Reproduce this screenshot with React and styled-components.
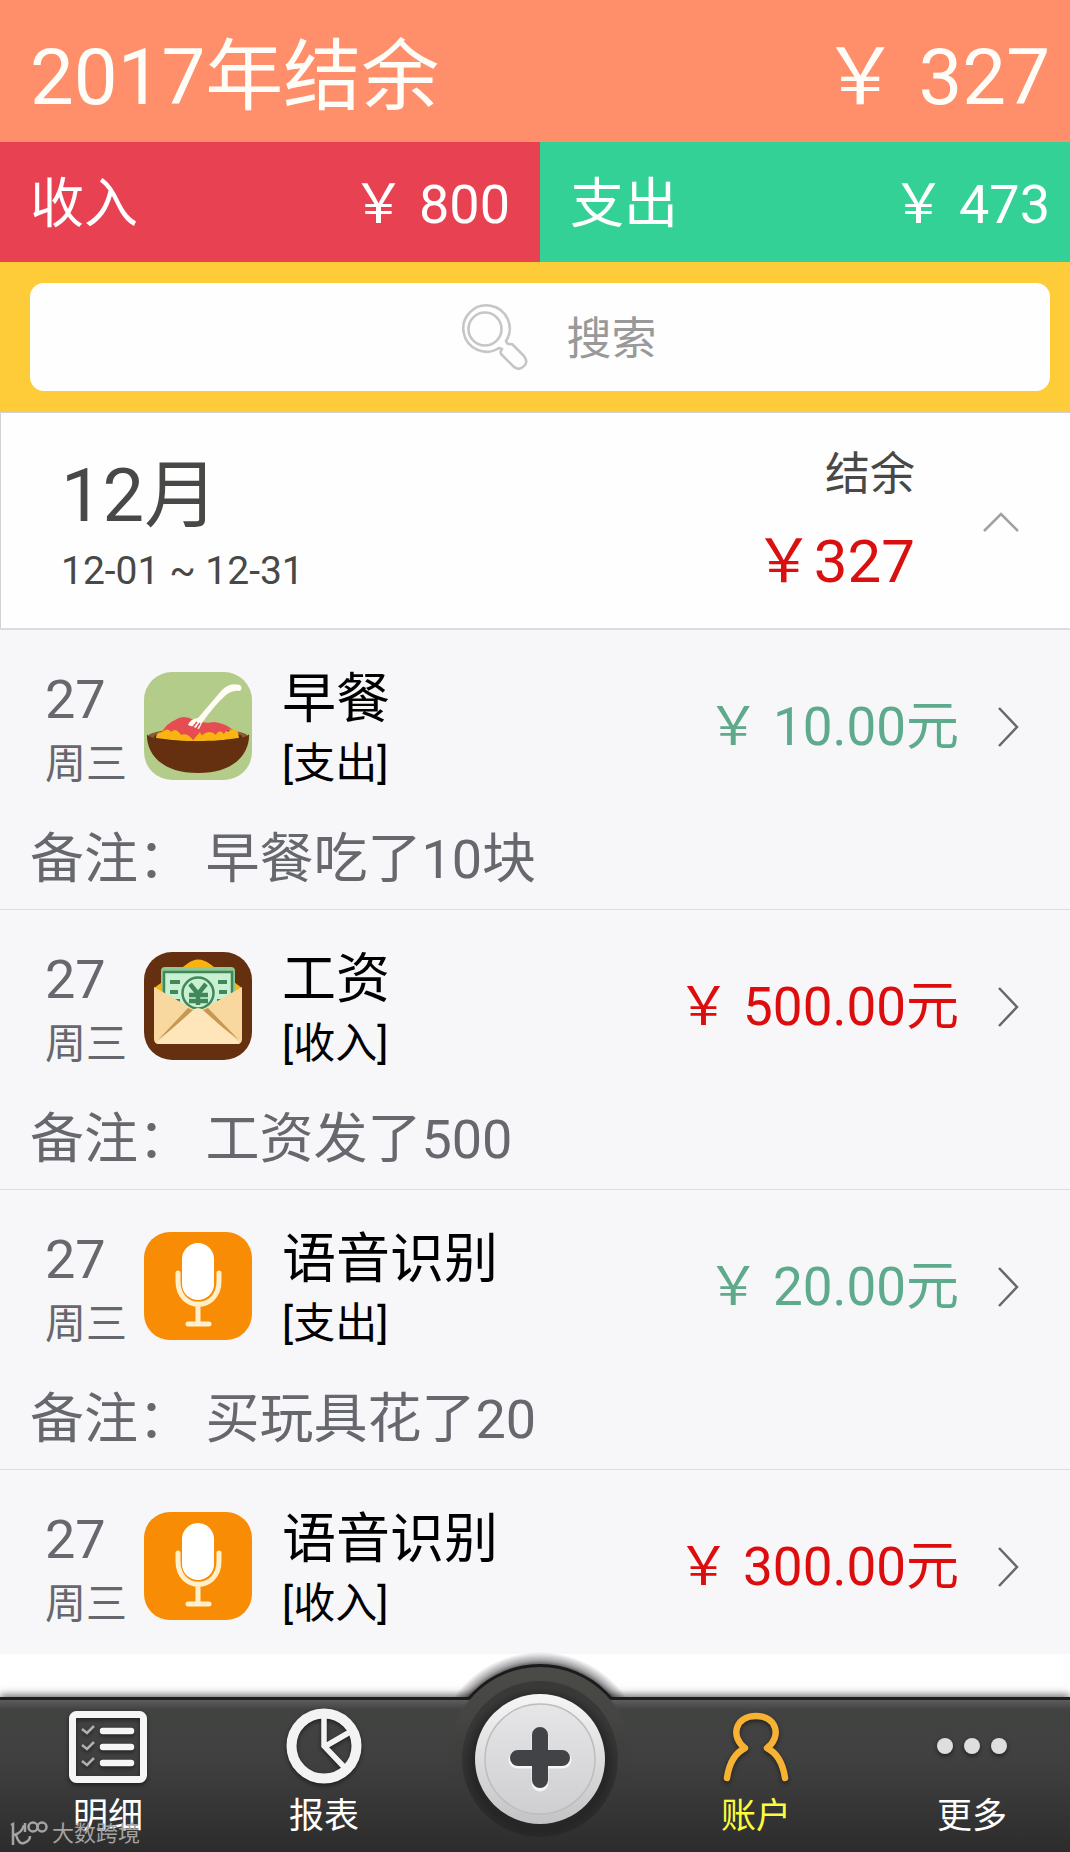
import React from "react";
import styled, { createGlobalStyle } from "styled-components";

const GlobalStyle = createGlobalStyle`
  * {
    box-sizing: border-box;
  }

  body {
    margin: 0;
    background: #fff;
    font-family: Roboto, "Noto Sans CJK SC", sans-serif;
  }

  button, input {
    font-family: inherit;
  }
`;

const Page = styled.div`
  display: flex;
  flex-direction: column;
  min-height: 100vh;
`;

const YearBar = styled.header`
  display: flex;
  justify-content: space-between;
  align-items: center;
  padding: 32px 20px 18px 30px;
  background: #ff8f6b;
  color: #fffdf8;
  font-size: 78px;
  line-height: 92px;
`;

const YearTitle = styled.h1`
  margin: 0;
  font-size: inherit;
  font-weight: 400;
`;

const Totals = styled.div`
  display: grid;
  grid-template-columns: 54fr 53fr;
`;

const Total = styled.div`
  display: flex;
  justify-content: space-between;
  padding: 31px ${(props) => (props.$income ? "30px" : "20px")} 25px 30px;
  background: ${(props) => (props.$income ? "#e84152" : "#34d196")};
  color: #fff;
  font-size: 54px;
  line-height: 64px;
`;

const SearchBand = styled.div`
  padding: 21px 20px 21px 30px;
  background: #ffcc39;
`;

const SearchBox = styled.label`
  display: flex;
  align-items: center;
  gap: 34px;
  height: 108px;
  padding-left: 42%;
  border-radius: 14px;
  background: #fefefe;
`;

const SearchInput = styled.input`
  flex: 1;
  min-width: 0;
  padding: 5px 0 0;
  border: 0;
  outline: 0;
  background: none;
  color: #333;
  font-size: 45px;
  line-height: 60px;

  &::placeholder {
    color: #999;
    opacity: 1;
  }
`;

const MonthCard = styled.section`
  display: flex;
  justify-content: space-between;
  padding: 30px 51px 27px 60px;
  border: 1px solid #d2d2d4;
  border-right: 0;
  border-bottom: 2px solid #dcdbde;
  background: #fefefe;
  color: #484846;
`;

const MonthName = styled.h2`
  margin: 8px 0 0;
  font-size: 74px;
  font-weight: 400;
  line-height: 90px;
`;

const MonthRange = styled.div`
  font-size: 39px;
  line-height: 60px;
`;

const MonthSide = styled.div`
  display: flex;
  align-items: center;
  gap: 68px;
`;

const MonthBalance = styled.div`
  font-size: 45px;
  line-height: 60px;
  text-align: right;
`;

const BalanceAmount = styled.div`
  padding-top: 20px;
  color: #d9100f;
  font-size: 60px;
  line-height: 74px;
`;

const IconButton = styled.button`
  display: flex;
  padding: 0;
  border: 0;
  background: none;
  cursor: pointer;
`;

const List = styled.ul`
  margin: 0;
  padding: 0;
  list-style: none;
  background: #f7f6f8;
`;

const Entry = styled.li`
  padding: 38px 49px 17px 30px;
  border-bottom: 1px solid #dddce0;

  &:last-child {
    padding-bottom: 18px;
    border-bottom: 0;
  }
`;

const EntryMain = styled.div`
  display: flex;
  align-items: center;
`;

const EntryDate = styled.div`
  width: 114px;
  padding-left: 15px;
  color: #66686e;
  font-size: 54px;
  line-height: 64px;
`;

const Weekday = styled.div`
  font-size: 41px;
`;

const CategoryIcon = styled.svg`
  width: 108px;
  height: 108px;
  margin-bottom: 12px;
`;

const EntryTitle = styled.div`
  flex: 1;
  padding-left: 30px;
  color: #000;
  font-size: 54px;
  line-height: 64px;
`;

const EntryKind = styled.div`
  font-size: 42px;
`;

const EntrySide = styled.div`
  display: flex;
  align-items: center;
  gap: 38px;
  margin-bottom: 10px;
`;

const EntryAmount = styled.div`
  color: ${(props) => (props.$income ? "#dc0d0c" : "#5eaa8c")};
  font-size: 53px;
  line-height: 64px;
`;

const Note = styled.p`
  margin: 32px 0 0;
  color: #66686e;
  font-size: 54px;
  line-height: 64px;
`;

const Nav = styled.nav`
  position: relative;
  margin-top: auto;
  overflow-x: clip;
  border-top: 3px solid #1d1d1e;
  background: linear-gradient(#5c5c5c, #414341 10px, #404040 60px, #2c2c2d);
  box-shadow: 0 -2px 8px rgba(40, 34, 40, 0.7);
`;

const NavItems = styled.div`
  display: grid;
  grid-template-columns: repeat(5, 1fr);
  grid-template-rows: 152px;
  margin-right: -10px;
`;

const NavItem = styled.button`
  display: flex;
  flex-direction: column;
  align-items: center;
  gap: 10px;
  padding: 7px 0 0;
  border: 0;
  background: none;
  color: ${(props) => (props.$active ? "#fcfc3c" : "#fff")};
  font-size: 35px;
  line-height: 40px;
  cursor: pointer;

  svg {
    flex-shrink: 0;
    overflow: visible;
    filter: drop-shadow(0 2px 2px rgba(0, 0, 0, 0.5));
  }
`;

const AddButton = styled.button`
  display: flex;
  justify-content: center;
  align-self: end;
  padding: 0;
  border: 0;
  background: none;
  cursor: pointer;
`;

const Watermark = styled.div`
  position: absolute;
  left: 10px;
  bottom: 5px;
  display: flex;
  align-items: center;
  gap: 4px;
  color: #a3a3a3;
  font-size: 22px;
  line-height: 26px;
  pointer-events: none;
`;

const SearchIcon = () => (
  <svg width="74" height="70" viewBox="0 0 74 70" fill="none" stroke="#c6c6c6" strokeWidth="2.6" strokeLinejoin="round" aria-hidden="true">
    <circle cx="27" cy="27" r="16.5" />
    <path d="M41 46 A23.2 23.2 0 1 1 48 39 Q49 43 54 42 L66 54 Q71 61 65 65 Q60 69 55 64 L43 52 Q42 49 44 47 Z" />
  </svg>
);

const FoodIcon = () => (
  <CategoryIcon viewBox="0 0 108 108" aria-hidden="true">
    <rect width="108" height="108" rx="28" fill="#b4cc89" />
    <ellipse cx="54" cy="65" rx="50.500" ry="9" fill="#8a5a34" />
    <ellipse cx="54" cy="65" rx="44" ry="7" fill="#55280f" />
    <path d="M12 66 Q12 60 18 60 Q20 53 27 59 Q30 53 35 60 L74 60 Q79 53 84 60 Q90 54 94 60 L95 66 Q54 73 12 66Z" fill="#f9b312" />
    <path d="M18 60 Q22 52 31 48 Q39 42 50 48 Q61 52 70 50 Q81 51 89 58 Q83 56 80 62 Q75 56 72 63 Q66 57 58 63 L49 68 Q43 60 37 63 Q32 55 27 60 Q24 55 18 60Z" fill="#e54d52" />
    <path d="M3 62 C4 67 25 69 54 69 C83 69 104 66 105 62 C106 76 96 101 54 101 C12 101 2 76 3 62Z" fill="#65300f" />
    <path d="M50 67 L56 60 L59 67Z M65 64 Q69 59 72 66 M25 65 Q30 61 34 67" fill="#f9b312" />
    <path d="M96 13 Q99 16 96 19 Q89 18 82 23 C73 31 65 41 58 51 L55 57 L44 53 Q46 47 54 46 C62 37 70 27 78 18 Q86 10 96 13Z" fill="#fffdf5" />
    <path d="M48 56 L53 50 M52 57 L56 51" stroke="#e54d52" strokeWidth="1.500" />
  </CategoryIcon>
);

const SalaryIcon = () => (
  <CategoryIcon viewBox="0 0 108 108" aria-hidden="true">
    <rect width="108" height="108" rx="28" fill="#65300f" />
    <path d="M10 36 L43 12 Q54 3 66 12 L98 36 V50 H10Z" fill="#f8b311" />
    <rect x="17" y="15" width="74" height="50" rx="4" fill="#8fc894" />
    <path d="M20 20 H88 V60 H20Z" fill="#c9f0d2" stroke="#408759" strokeWidth="2.500" />
    <path d="M26 30h10M26 40h8M26 49h10M74 30h9M75 40h8M73 49h9" stroke="#408759" strokeWidth="4" />
    <circle cx="54" cy="41" r="15.500" fill="#c9f0d2" stroke="#408759" strokeWidth="2.500" />
    <path d="M46 32 L54 42 L62 32 M54 42 V53 M45 43 H64 M45 49 H64" fill="none" stroke="#408759" strokeWidth="4.500" />
    <path d="M10 35 L54 60 L98 35 V87 Q98 92 93 92 H15 Q10 92 10 87Z" fill="#f9d89f" />
    <path d="M44 56 L14 88 L51 59Z M64 56 L95 88 L57 59Z" fill="#c69851" />
    <path d="M12 91 L48 59 Q54 53 60 59 L96 91 Q95 92 93 92 H15Z" fill="#ffe5ba" />
  </CategoryIcon>
);

const VoiceIcon = () => (
  <CategoryIcon viewBox="0 0 108 108" aria-hidden="true">
    <rect width="108" height="108" rx="26" fill="#f98c05" />
    <rect x="38" y="11" width="32" height="57" rx="16" fill="#fff" />
    <path d="M34 41 V49 C34 80 75 80 75 49 V41 M54 72 V92 M44 92 H65" fill="none" stroke="#fff0cb" strokeWidth="5" strokeLinecap="round" />
  </CategoryIcon>
);

const ChevronRight = () => (
  <svg width="24" height="42" viewBox="0 0 24 42" fill="none" stroke="#66676b" strokeWidth="2.500" aria-hidden="true">
    <path d="M2 2 L20 21 L2 40" />
  </svg>
);

const ListIcon = () => (
  <svg width="80" height="80" viewBox="0 0 80 80" fill="none" stroke="#f5f5f5" aria-hidden="true">
    <rect x="4.500" y="7.500" width="71" height="65" rx="4" strokeWidth="7" />
    <path d="M35 24 H63 M35 40 H63 M35 56 H63" strokeWidth="6.500" strokeLinecap="round" />
    <path d="M14 22 L19 26 L26 19 M14 38 L19 42 L26 35 M14 54 L19 58 L26 51" stroke="#aeb0b0" strokeWidth="2.500" />
  </svg>
);

const PieIcon = () => (
  <svg width="80" height="80" viewBox="0 0 80 80" fill="none" stroke="#f3f3f3" aria-hidden="true">
    <circle cx="40" cy="39" r="32.500" strokeWidth="10" />
    <path d="M40 9 V39 L61 61 M40 40 L66 25" strokeWidth="5.500" />
  </svg>
);

const AccountIcon = () => (
  <svg width="80" height="80" viewBox="0 0 80 80" fill="none" stroke="#f7b133" strokeWidth="6.500" strokeLinecap="round" strokeLinejoin="round" aria-hidden="true">
    <path d="M11 71 C13 57 19 46 29 41 C14 30 19 9 40 9 C61 9 66 30 51 41 C61 46 67 57 69 71" />
    <path d="M34 42 H46" stroke="none" />
  </svg>
);

const MoreIcon = () => (
  <svg width="80" height="80" viewBox="0 0 80 80" fill="#dedede" aria-hidden="true">
    <circle cx="13" cy="39" r="8" />
    <circle cx="40" cy="39" r="8" />
    <circle cx="67" cy="39" r="8" />
  </svg>
);

const AddIcon = () => (
  <svg width="216" height="200" viewBox="0 0 216 200" aria-hidden="true">
    <defs>
      <radialGradient id="halo">
        <stop offset="0.850" stopColor="#000" stopOpacity="0.900" />
        <stop offset="0.920" stopColor="#201a20" stopOpacity="0.400" />
        <stop offset="1" stopColor="#201a20" stopOpacity="0" />
      </radialGradient>
      <linearGradient id="ring" x2="0" y2="1">
        <stop stopColor="#4b4c48" />
        <stop offset="0.300" stopColor="#444542" />
        <stop offset="0.700" stopColor="#363636" stopOpacity="0" />
      </linearGradient>
      <radialGradient id="well" cy="0.540">
        <stop offset="0.850" stopColor="#262627" />
        <stop offset="1" stopColor="#29292a" stopOpacity="0.500" />
      </radialGradient>
      <linearGradient id="rim" x2="0" y2="1">
        <stop stopColor="#f6f6f6" />
        <stop offset="1" stopColor="#c3c3c5" />
      </linearGradient>
      <linearGradient id="face" x2="0" y2="1">
        <stop stopColor="#e6e5e7" />
        <stop offset="1" stopColor="#cfcfd1" />
      </linearGradient>
      <clipPath id="aboveBar">
        <rect width="216" height="46" />
      </clipPath>
    </defs>
    <circle cx="108" cy="106" r="106" fill="url(#halo)" clipPath="url(#aboveBar)" />
    <circle cx="108" cy="106" r="94" fill="#1b1b1c" clipPath="url(#aboveBar)" />
    <circle cx="108" cy="107" r="92" fill="url(#ring)" />
    <circle cx="108" cy="107" r="78" fill="url(#well)" />
    <circle cx="108" cy="107" r="65" fill="url(#rim)" />
    <circle cx="108" cy="107" r="55" fill="url(#face)" stroke="#bdbdbf" strokeWidth="1.500" />
    <path d="M108 85 V131 M85 108 H131" stroke="#f6f6f6" strokeWidth="17" strokeLinecap="round" />
    <path d="M108 83 V128 M86 106 H130" stroke="#424346" strokeWidth="16" strokeLinecap="round" />
  </svg>
);

const WatermarkLogo = () => (
  <svg width="38" height="26" viewBox="0 0 38 26" fill="none" stroke="#a3a3a3" strokeWidth="2.500" aria-hidden="true">
    <path d="M1 4 L3 3 V24 M14 4 Q12 12 4 14 M6 14 Q9 24 14 22 Q20 20 20 15" />
    <path d="M15 2 V11" />
    <circle cx="23" cy="6" r="4.500" />
    <circle cx="32" cy="6" r="4.500" />
  </svg>
);

const entries = [
  { id: 1, day: "27", weekday: "周三", Icon: FoodIcon, title: "早餐", income: false, amount: "10.00", note: "早餐吃了10块" },
  { id: 2, day: "27", weekday: "周三", Icon: SalaryIcon, title: "工资", income: true, amount: "500.00", note: "工资发了500" },
  { id: 3, day: "27", weekday: "周三", Icon: VoiceIcon, title: "语音识别", income: false, amount: "20.00", note: "买玩具花了20" },
  { id: 4, day: "27", weekday: "周三", Icon: VoiceIcon, title: "语音识别", income: true, amount: "300.00" },
];

const App = () => {
  return (
    <>
      <GlobalStyle />
      <Page>
        <YearBar>
          <YearTitle>2017年结余</YearTitle>
          <span>￥ 327</span>
        </YearBar>
        <Totals>
          <Total $income>
            <span>收入</span>
            <span>￥ 800</span>
          </Total>
          <Total>
            <span>支出</span>
            <span>￥ 473</span>
          </Total>
        </Totals>
        <SearchBand>
          <SearchBox>
            <SearchIcon />
            <SearchInput type="text" placeholder="搜索" aria-label="搜索" />
          </SearchBox>
        </SearchBand>

        <MonthCard>
          <div>
            <MonthName>12月</MonthName>
            <MonthRange>12-01 ~ 12-31</MonthRange>
          </div>
          <MonthSide>
            <MonthBalance>
              结余
              <BalanceAmount>￥327</BalanceAmount>
            </MonthBalance>
            <IconButton type="button" aria-label="收起">
              <svg width="36" height="20" viewBox="0 0 36 20" fill="none" stroke="#9fa0a2" strokeWidth="2.500" aria-hidden="true">
                <path d="M1 19 L18 2 L35 19" />
              </svg>
            </IconButton>
          </MonthSide>
        </MonthCard>

        <List>
          {entries.map(({ id, day, weekday, Icon, title, income, amount, note }) => (
            <Entry key={id}>
              <EntryMain>
                <EntryDate>
                  {day}
                  <Weekday>{weekday}</Weekday>
                </EntryDate>
                <Icon />
                <EntryTitle>
                  {title}
                  <EntryKind>[{income ? "收入" : "支出"}]</EntryKind>
                </EntryTitle>
                <EntrySide>
                  <EntryAmount $income={income}>￥ {amount}元</EntryAmount>
                  <IconButton type="button" aria-label="查看">
                    <ChevronRight />
                  </IconButton>
                </EntrySide>
              </EntryMain>
              {note && <Note>备注： {note}</Note>}
            </Entry>
          ))}
        </List>

        <Nav>
          <NavItems>
            <NavItem type="button">
              <ListIcon />
              明细
            </NavItem>
            <NavItem type="button">
              <PieIcon />
              报表
            </NavItem>
            <AddButton type="button" aria-label="添加">
              <AddIcon />
            </AddButton>
            <NavItem type="button" $active>
              <AccountIcon />
              账户
            </NavItem>
            <NavItem type="button">
              <MoreIcon />
              更多
            </NavItem>
          </NavItems>
          <Watermark>
            <WatermarkLogo />
            大数跨境
          </Watermark>
        </Nav>
      </Page>
    </>
  );
};

export default App;
